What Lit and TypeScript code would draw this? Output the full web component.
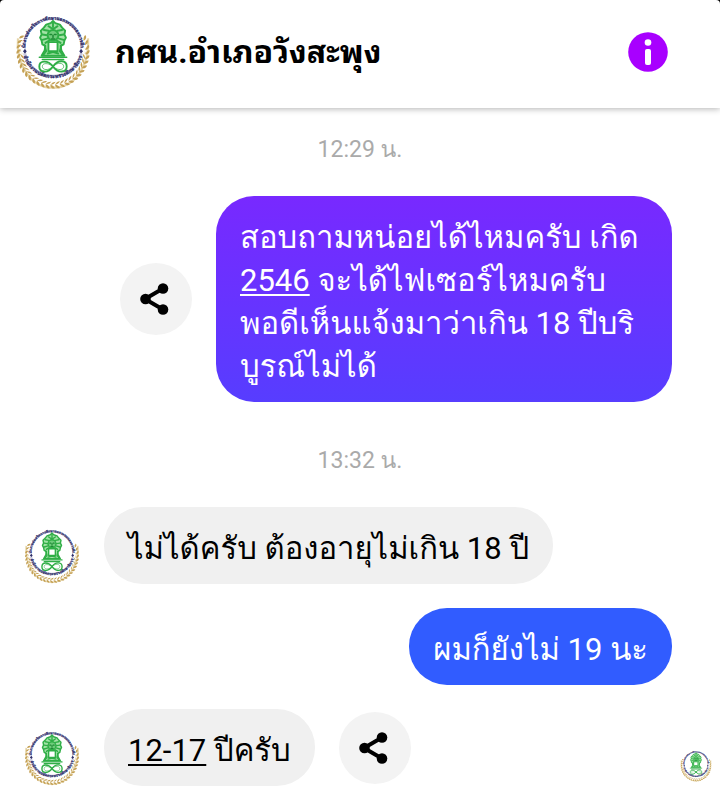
import { LitElement, html, css, svg } from 'lit'
import { customElement } from 'lit/decorators.js'

const leafAngles = Array.from({ length: 29 }, (_, i) => -24 + i * 8.2)

@customElement('office-seal')
export class OfficeSeal extends LitElement {
  static styles = css`
    :host {
      display: block;
      flex: none;
    }

    svg {
      display: block;
      width: 100%;
      height: 100%;
      overflow: visible;
    }

    .ring-text {
      font-family: Loma, 'Noto Sans Thai', sans-serif;
      font-weight: 700;
      fill: #30306b;
      stroke: #30306b;
      stroke-width: 0.4px;
      text-anchor: middle;
    }

    .upper {
      font-size: 6px;
    }

    .lower {
      font-size: 7px;
    }
  `

  render() {
    return html`
      <svg viewBox="0 0 100 100" role="img" aria-label="ตรา กศน.">
        <path d="M4 32C1 62 18 97 50 97S99 62 96 32" fill="none" stroke="#e6d5a8" stroke-width="3" />
        ${leafAngles.map(
          (a) => svg`
            <g transform="rotate(${a} 50 50)">
              <path d="M93 53q1-5 5-6q1 5-5 6q-4-3-4-7q4 2 4 7" fill="#c4a054" />
            </g>`
        )}
        <circle cx="50" cy="44" r="41" fill="#fff" />
        <circle cx="50" cy="44" r="38" fill="none" stroke="#c9c9de" stroke-width="4" />
        <path d="M12.500 36H8v16h4.500zM87.500 36H92v16h-4.500z" fill="#fff" />
        <path id="upper" d="M13.500 44A36.500 36.500 0 0 1 86.500 44" fill="none" />
        <path id="lower" d="M9.500 44A40.500 40.500 0 0 0 90.500 44" fill="none" />
        <text class="ring-text upper">
          <textPath href="#upper" startOffset="50%">สำนักงานส่งเสริมการศึกษานอกระบบและการศึกษา</textPath>
        </text>
        <text class="ring-text lower">
          <textPath href="#lower" startOffset="50%">สำนักงานปลัดกระทรวงศึกษาธิการ</textPath>
        </text>
        <path d="M10.500 49l2.500 3 2.500-3-2.500-3zM84.500 49l2.500 3 2.500-3-2.500-3z" fill="#30306b" />
        <g fill="none" stroke="#2fae46" stroke-linecap="round" stroke-linejoin="round">
          <path
            d="M50 9l-3 3-6 2-3 4-4 4 1 5-2 4 2 4 1 5 4 2-1 6-4 7h30l-4-7-1-6 4-2 1-5 2-4-2-4 1-5-4-4-3-4-6-2z"
            fill="#a2e2a6"
            stroke-width="2.500"
          />
          <path d="M50 11v6M44 16l6 4 6-4M38 21l6 1M62 21l-6 1M36 27l6 1M64 27l-6 1M36 34l7-2M64 34l-7-2M40 38l5-3M60 38l-5-3" stroke-width="2.500" />
          <circle cx="50" cy="28" r="7" fill="#6fcc7b" stroke-width="2.500" />
          <path d="M46 27h2M52 27h2M50 28v3M48 33h4" stroke="#1d8a35" stroke-width="2" />
          <path d="M44 37h12v12H44z" fill="#fff" stroke-width="2.500" />
          <path d="M39 41l2 8-3 4M61 41l-2 8 3 4M43 52l7-2 7 2" stroke-width="2.500" />
          <path d="M32 57h36M36 60h28" stroke-width="2" />
          <path d="M50 69C43 60 32 61 32 69S43 79 50 69S68 61 68 69S57 79 50 69z" stroke-width="2.500" />
          <path d="M50 69C44 64 36 64 36 69S44 75 50 69S64 64 64 69S56 75 50 69z" />
        </g>
      </svg>
    `
  }
}

@customElement('share-button')
export class ShareButton extends LitElement {
  static styles = css`
    :host {
      display: block;
      flex: none;
    }

    button {
      display: grid;
      place-items: center;
      width: 72px;
      height: 72px;
      padding: 0;
      border: 0;
      border-radius: 50%;
      background: #f3f3f3;
      color: #000;
      cursor: pointer;
    }

    svg {
      width: 32px;
      height: 32px;
    }
  `

  render() {
    return html`
      <button type="button" aria-label="แชร์">
        <svg viewBox="0 0 32 32" fill="currentColor" aria-hidden="true">
          <path d="M23 5.500L5 16l18 10.500" fill="none" stroke="currentColor" stroke-width="4" />
          <circle cx="23" cy="5.500" r="5.300" />
          <circle cx="5.500" cy="16" r="5.300" />
          <circle cx="23" cy="26.500" r="5.300" />
        </svg>
      </button>
    `
  }
}

@customElement('app-root')
export class AppRoot extends LitElement {
  static styles = css`
    :host {
      display: block;
      min-height: 100vh;
      background: #fff;
      color: #000;
      font-family: Roboto, Loma, 'Noto Sans Thai', sans-serif;
      font-size: 31px;
      line-height: 43px;
    }

    .top {
      background: #000;
    }

    header {
      display: flex;
      align-items: center;
      gap: 24px;
      box-sizing: border-box;
      height: 108px;
      padding: 0 52px 4px 15px;
      border-radius: 4px 4px 0 0;
      background: #fff;
      box-shadow: 0 1px 6px rgba(0, 0, 0, 0.3);
    }

    .page-seal {
      width: 76px;
      height: 76px;
    }

    h1 {
      flex: 1;
      margin: 0;
      font-family: Roboto, 'Noto Sans Thai Looped', 'Noto Sans Thai', sans-serif;
      font-size: 32px;
      font-weight: 700;
    }

    .info {
      width: 40px;
      height: 40px;
      padding: 0;
      border: 0;
      border-radius: 50%;
      background: none;
      cursor: pointer;
    }

    .info svg {
      display: block;
    }

    main {
      display: flex;
      flex-direction: column;
      gap: 24px;
      padding: 28px 8px 12px 24px;
    }

    time {
      align-self: center;
      margin: 0 0 8px;
      padding-right: 16px;
      color: #aaa;
      font-size: 23px;
      line-height: 28px;
    }

    .later {
      margin-top: 21px;
    }

    .row {
      display: flex;
      align-items: flex-end;
      gap: 24px;
    }

    .sent {
      align-items: center;
      justify-content: flex-end;
      padding-right: 40px;
    }

    .bubble {
      margin: 0;
      padding: 20px 24px 14px;
      border-radius: 38px;
      background: #f0f0f0;
    }

    .sent .bubble {
      background: #315cff;
      color: #fff;
    }

    .sent .question {
      flex: 0 1 408px;
      background: linear-gradient(#7829ff, #573dff);
    }

    .bubble a {
      color: inherit;
      text-decoration: underline;
      text-decoration-thickness: 2px;
      text-underline-offset: 3px;
    }

    .avatar {
      width: 56px;
      height: 56px;
    }

    .row share-button {
      align-self: center;
    }

    .seen {
      width: 32px;
      height: 32px;
      margin: 0 0 4px auto;
    }
  `

  render() {
    return html`
      <div class="top">
        <header>
          <office-seal class="page-seal"></office-seal>
          <h1>กศน.อำเภอวังสะพุง</h1>
          <button class="info" type="button" aria-label="ข้อมูล">
            <svg viewBox="0 0 40 40" width="40" height="40" aria-hidden="true">
              <circle cx="20" cy="20" r="19.800" fill="#a800ff" />
              <circle cx="20" cy="10.500" r="3.300" fill="#fff" />
              <rect x="17" y="17" width="6" height="16" rx="2" fill="#fff" />
            </svg>
          </button>
        </header>
      </div>
      <main>
        <time datetime="12:29">12:29 น.</time>
        <div class="row sent">
          <share-button></share-button>
          <p class="bubble question">
            สอบถามหน่อยได้ไหมครับ เกิด<br /><a href="tel:2546">2546</a> จะได้ไฟเซอร์ไหมครับ<br />พอดีเห็นแจ้งมาว่าเกิน 18 ปีบริ<br />บูรณ์ไม่ได้
          </p>
        </div>
        <time class="later" datetime="13:32">13:32 น.</time>
        <div class="row">
          <office-seal class="avatar"></office-seal>
          <p class="bubble">ไม่ได้ครับ ต้องอายุไม่เกิน 18 ปี</p>
        </div>
        <div class="row sent">
          <p class="bubble">ผมก็ยังไม่ 19 นะ</p>
        </div>
        <div class="row">
          <office-seal class="avatar"></office-seal>
          <p class="bubble"><a href="tel:12-17">12-17</a> ปีครับ</p>
          <share-button></share-button>
          <office-seal class="seen"></office-seal>
        </div>
      </main>
    `
  }
}

declare global {
  interface HTMLElementTagNameMap {
    'app-root': AppRoot
    'office-seal': OfficeSeal
    'share-button': ShareButton
  }
}
